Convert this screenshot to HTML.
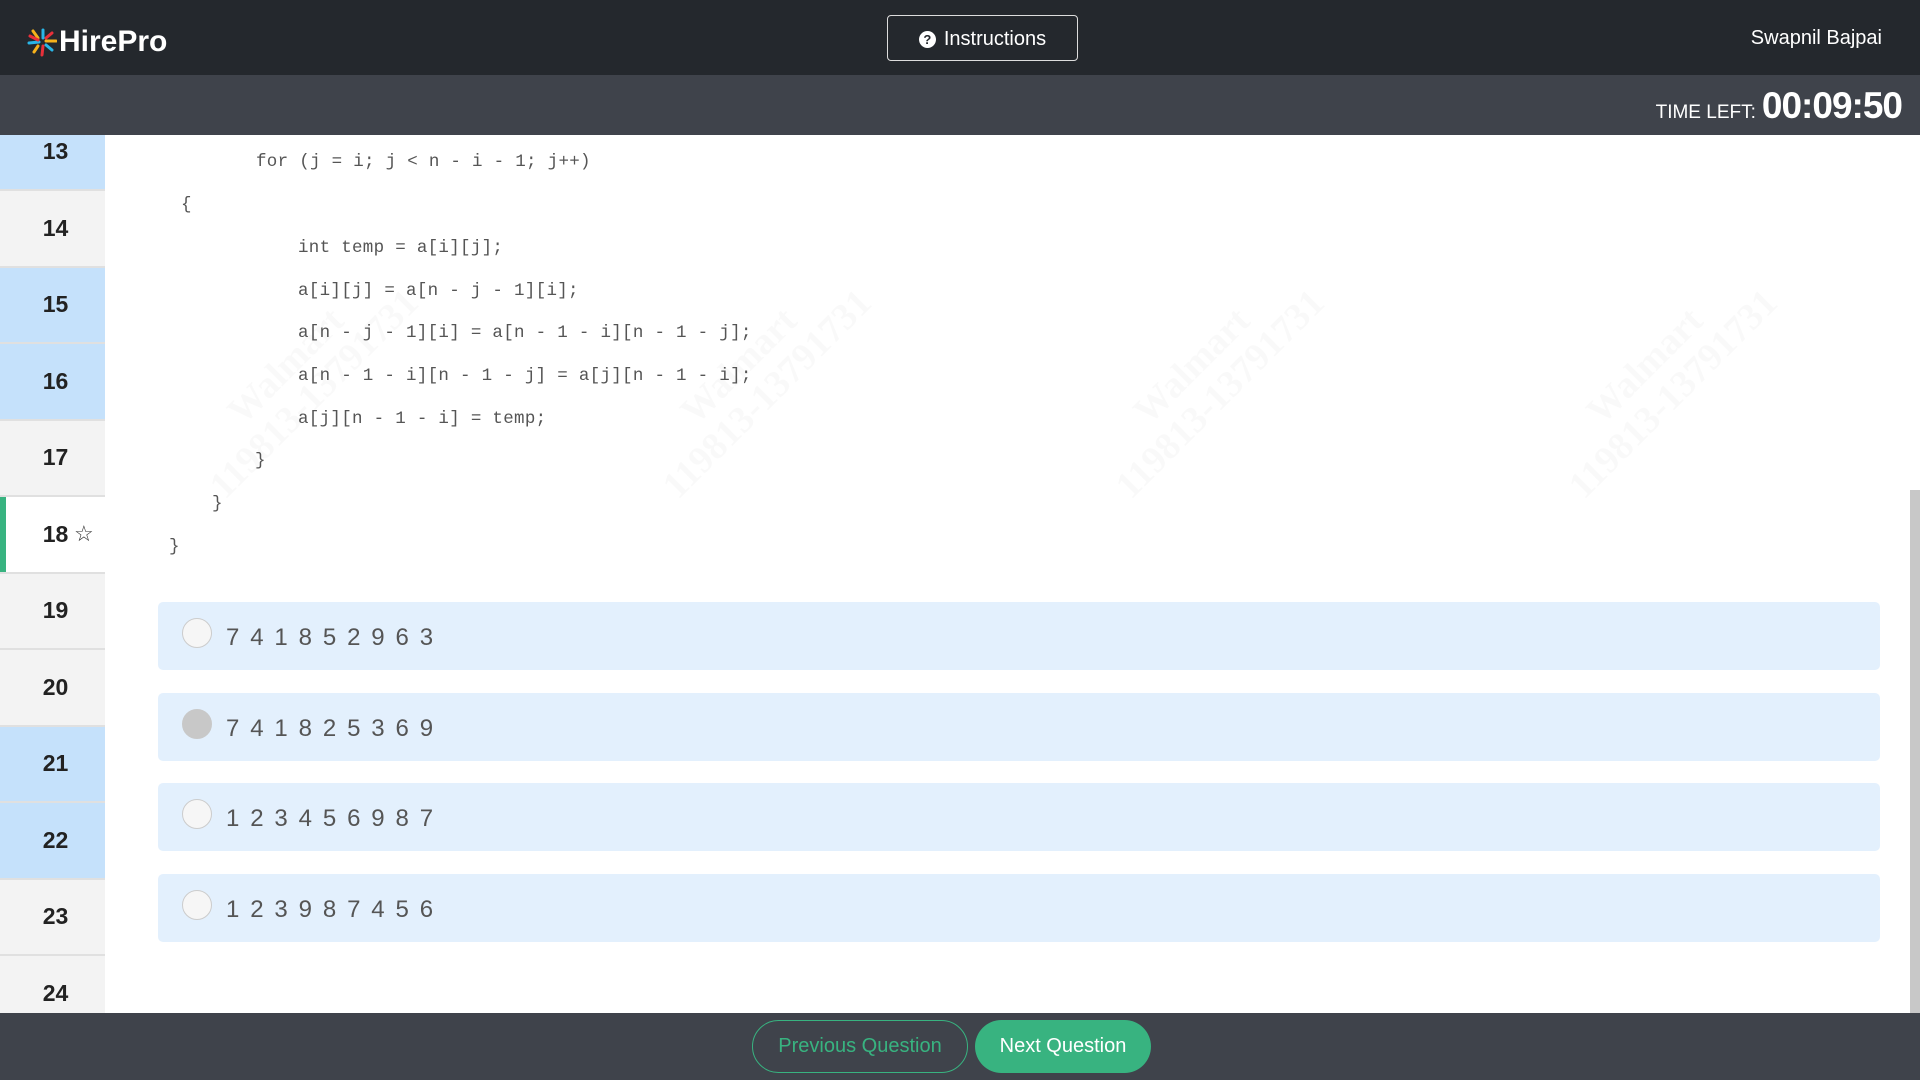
<!DOCTYPE html>
<html><head><meta charset="utf-8"><style>
*{margin:0;padding:0;box-sizing:border-box}
body{width:1920px;height:1080px;overflow:hidden;background:#fff;font-family:"Liberation Sans",sans-serif;position:relative}
.hdr{position:absolute;left:0;top:0;width:1920px;height:75px;background:#24282d}
.sub{position:absolute;left:0;top:75px;width:1920px;height:60px;background:#3f434b}
.logo{position:absolute;left:27px;top:25px;display:flex;align-items:center}
.logo span{color:#fff;font-size:30px;font-weight:bold;margin-left:2px;letter-spacing:0}
.ins{position:absolute;left:887px;top:15px;width:191px;height:46px;border:1px solid #ddd;border-radius:4px;color:#fff;font-size:20px;display:flex;align-items:center;justify-content:center;gap:8px;padding-top:2px}
.ins i{display:inline-block;width:17px;height:17px;border-radius:50%;background:#fff;color:#24282d;font-style:normal;font-weight:bold;font-size:13px;text-align:center;line-height:17px}
.name{position:absolute;right:38px;top:27px;color:#fff;font-size:20px}
.tl{position:absolute;right:18px;top:85px;color:#fff;display:flex;align-items:baseline}
.tl .a{font-size:19px;margin-right:6px}
.tl .b{font-size:37px;font-weight:bold;letter-spacing:-1px}
.side{position:absolute;left:0;top:135px;width:105px;height:878px;overflow:hidden}
.side .in{position:absolute;left:0;top:-20.5px;width:105px}
.it{height:76.5px;border-bottom:2px solid #e0e0e0;font-size:23px;font-weight:bold;color:#222;display:flex;align-items:center;justify-content:center;position:relative;padding-left:6px}
.b1{background:#c5e1fb}.g1{background:#f3f3f3}
.cur{background:#fff}.cur:before{content:"";position:absolute;left:0;top:0;bottom:0;width:6px;background:#38b380}
.star{position:absolute;left:74px;top:24px;font-weight:normal;font-size:22px;color:#333}
.code{position:absolute;font-family:"Liberation Mono",monospace;font-size:17.5px;color:#555;white-space:pre;letter-spacing:0.3px}
.wm{position:absolute;font-family:"Liberation Serif",serif;font-weight:bold;font-size:38px;color:rgba(0,0,0,0.025);transform:rotate(-45deg);text-align:center;line-height:40px;width:300px}
.opt{position:absolute;left:158px;width:1722px;height:68px;background:#e3f0fd;border-radius:5px}
.rad{position:absolute;left:24px;top:16px;width:30px;height:30px;border-radius:50%;background:#f6f6f6;border:1px solid #ccc}
.rad.s{background:#c8c8c8;border-color:#c8c8c8}
.opt .t{position:absolute;left:68px;top:22px;font-size:24px;color:#555;letter-spacing:2.1px}
.foot{position:absolute;left:0;top:1013px;width:1920px;height:67px;background:#3f434b}
.btn{position:absolute;top:7px;height:53px;border-radius:27px;font-size:20px;display:flex;align-items:center;justify-content:center}
.prev{left:752px;width:216px;border:1px solid #38b380;color:#38b380}
.next{left:975px;width:176px;background:#38b380;color:#fff}
.sb{position:absolute;left:1910px;top:490px;width:10px;height:523px;background:#c8c8c8}
</style></head><body>
<div class="hdr">
 <div class="logo">
  <svg width="30" height="30" viewBox="0 0 30 30">
   <g stroke-width="3" stroke-linecap="round">
    <line x1="16" y1="3" x2="16" y2="11" stroke="#29b6e8"/>
    <line x1="16" y1="19" x2="15" y2="28" stroke="#e8303a"/>
    <line x1="19" y1="14" x2="29" y2="14" stroke="#f6b21b"/>
    <line x1="2" y1="16" x2="12" y2="15" stroke="#29b6e8"/>
    <line x1="6" y1="4" x2="11" y2="11" stroke="#f6b21b"/>
    <line x1="19" y1="18" x2="25" y2="23" stroke="#29b6e8"/>
    <line x1="25" y1="6" x2="19" y2="11" stroke="#e8303a"/>
    <line x1="11" y1="19" x2="7" y2="25" stroke="#f6b21b"/>
    <line x1="3" y1="9" x2="11" y2="13" stroke="#e8303a"/>
   </g>
  </svg>
  <span>HirePro</span>
 </div>
 <div class="ins"><i>?</i>Instructions</div>
 <div class="name">Swapnil Bajpai</div>
</div>
<div class="sub"></div>
<div class="tl"><span class="a">TIME LEFT:</span><span class="b">00:09:50</span></div>

<div class="side"><div class="in">
 <div class="it b1">13</div><div class="it g1">14</div><div class="it b1">15</div><div class="it b1">16</div>
 <div class="it g1">17</div><div class="it cur">18<span class="star">☆</span></div>
 <div class="it g1">19</div><div class="it g1">20</div><div class="it b1">21</div><div class="it b1">22</div>
 <div class="it g1">23</div><div class="it g1">24</div>
</div></div>

<div class="wm" style="left:150px;top:340px">Walmart<br>119813-13791731</div>
<div class="wm" style="left:603px;top:340px">Walmart<br>119813-13791731</div>
<div class="wm" style="left:1056px;top:340px">Walmart<br>119813-13791731</div>
<div class="wm" style="left:1509px;top:340px">Walmart<br>119813-13791731</div>

<div class="code" style="left:256px;top:152px">for (j = i; j &lt; n - i - 1; j++)</div>
<div class="code" style="left:181px;top:195px">{</div>
<div class="code" style="left:298px;top:238px">int temp = a[i][j];</div>
<div class="code" style="left:298px;top:281px">a[i][j] = a[n - j - 1][i];</div>
<div class="code" style="left:298px;top:323px">a[n - j - 1][i] = a[n - 1 - i][n - 1 - j];</div>
<div class="code" style="left:298px;top:366px">a[n - 1 - i][n - 1 - j] = a[j][n - 1 - i];</div>
<div class="code" style="left:298px;top:409px">a[j][n - 1 - i] = temp;</div>
<div class="code" style="left:255px;top:451px">}</div>
<div class="code" style="left:212px;top:494px">}</div>
<div class="code" style="left:169px;top:537px">}</div>

<div class="opt" style="top:602px"><div class="rad"></div><div class="t">7 4 1 8 5 2 9 6 3</div></div>
<div class="opt" style="top:693px"><div class="rad s"></div><div class="t">7 4 1 8 2 5 3 6 9</div></div>
<div class="opt" style="top:783px"><div class="rad"></div><div class="t">1 2 3 4 5 6 9 8 7</div></div>
<div class="opt" style="top:874px"><div class="rad"></div><div class="t">1 2 3 9 8 7 4 5 6</div></div>

<div class="sb"></div>
<div class="foot">
 <div class="btn prev">Previous Question</div>
 <div class="btn next">Next Question</div>
</div>
</body></html>
